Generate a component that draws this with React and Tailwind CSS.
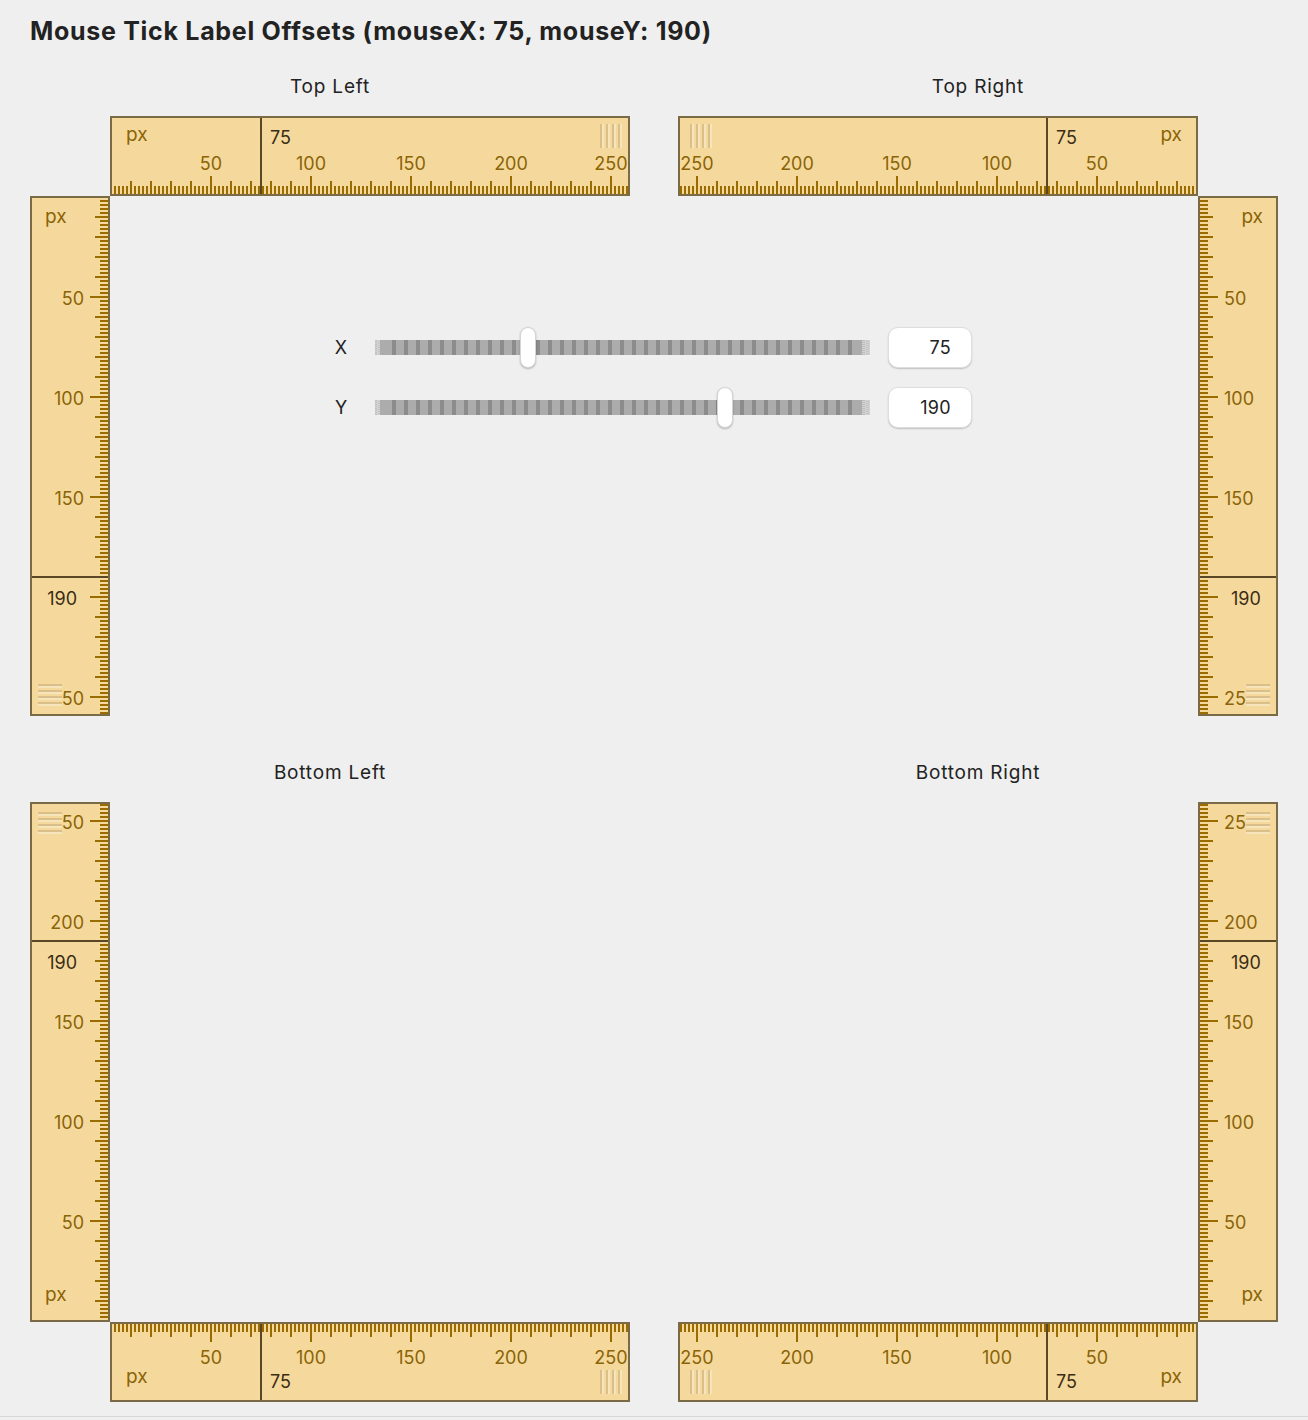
import React from "react";

const FILL = "#f5d99c";
const BORDER = "#7b6a46";
const TICK = "#9a6c00";
const LABEL = "#8a6407";
const MOUSE = "#3a2d16";
const LINE = "#5a4726";
const GRIP_DARK = "#dbbf8a";
const GRIP_LIGHT = "#f6e4ba";
const FONT = "Inter, 'Liberation Sans', sans-serif";

function tickLen(u) {
  return u % 50 === 0 ? 18 : u % 10 === 0 ? 13 : 8;
}

function HRuler({ reversed, ticksAt, mouse }) {
  const W = 520;
  const H = 80;
  const c = (u) => (reversed ? W - 2 * u - 1 : 2 * u + 1);
  const top = ticksAt === "bottom";
  const ticks = [];
  for (let u = 0; u <= 260; u += 2) {
    const len = tickLen(u);
    ticks.push(
      <rect key={u} x={c(u) - 1} y={top ? H - 2 - len : 2} width={2} height={len} fill={TICK} />
    );
  }
  const labelY = top ? 54 : 42;
  const pxY = top ? 25 : 61;
  const mY = top ? 28 : 66;
  const mx = c(mouse);
  const gx = reversed ? 12 : 490;
  const gy = top ? 8 : 48;
  const grip = [];
  for (let k = 0; k < 4; k++) {
    grip.push(<rect key={"d" + k} x={gx + 6 * k} y={gy} width={2} height={24} fill={GRIP_DARK} />);
    grip.push(<rect key={"l" + k} x={gx + 6 * k + 2} y={gy} width={2} height={24} fill={GRIP_LIGHT} />);
  }
  return (
    <svg width={W} height={H} className="block" style={{ fontFamily: FONT }}>
      <rect width={W} height={H} fill={FILL} />
      {ticks}
      {[50, 100, 150, 200, 250].map((u) => (
        <text key={u} x={c(u)} y={labelY} textAnchor="middle" fontSize={18} fill={LABEL}>
          {u}
        </text>
      ))}
      <text x={reversed ? W - 16 : 16} y={pxY} textAnchor={reversed ? "end" : "start"} fontSize={19} fill={LABEL}>
        px
      </text>
      <rect x={gx} y={gy} width={22} height={24} fill={FILL} />
      {grip}
      <rect x={mx - 1} y={0} width={2} height={H} fill={LINE} />
      <text x={mx + 9} y={mY} fontSize={18} fill={MOUSE}>
        {mouse}
      </text>
      <rect x={1} y={1} width={W - 2} height={H - 2} fill="none" stroke={BORDER} strokeWidth={2} />
    </svg>
  );
}

function VRuler({ reversed, ticksAt, mouse }) {
  const W = 80;
  const H = 520;
  const c = (u) => (reversed ? H - 2 * u - 1 : 2 * u + 1);
  const right = ticksAt === "right";
  const ticks = [];
  for (let u = 0; u <= 260; u += 2) {
    const len = tickLen(u);
    ticks.push(
      <rect key={u} x={right ? W - 2 - len : 2} y={c(u) - 1} width={len} height={2} fill={TICK} />
    );
  }
  const my = c(mouse);
  const mB = my + 28;
  const labels = [50, 100, 150, 200, 250].filter((u) => Math.abs(c(u) + 8 - mB) >= 20);
  const gx = right ? 8 : 48;
  const gy = reversed ? 10 : 488;
  const grip = [];
  for (let k = 0; k < 4; k++) {
    grip.push(<rect key={"d" + k} x={gx} y={gy + 6 * k} width={24} height={2} fill={GRIP_DARK} />);
    grip.push(<rect key={"l" + k} x={gx} y={gy + 6 * k + 2} width={24} height={2} fill={GRIP_LIGHT} />);
  }
  return (
    <svg width={W} height={H} className="block" style={{ fontFamily: FONT }}>
      <rect width={W} height={H} fill={FILL} />
      {ticks}
      {labels.map((u) => (
        <text
          key={u}
          x={right ? 54 : 26}
          y={c(u) + 8}
          textAnchor={right ? "end" : "start"}
          fontSize={18}
          fill={LABEL}
        >
          {u}
        </text>
      ))}
      <text x={right ? 15 : 65} y={reversed ? 499 : 27} textAnchor={right ? "start" : "end"} fontSize={19} fill={LABEL}>
        px
      </text>
      <rect x={gx} y={gy} width={24} height={22} fill={FILL} />
      {grip}
      <rect x={0} y={my - 1} width={W} height={2} fill={LINE} />
      <text x={right ? 47 : 33} y={mB} textAnchor={right ? "end" : "start"} fontSize={18} fill={MOUSE}>
        {mouse}
      </text>
      <rect x={1} y={1} width={W - 2} height={H - 2} fill="none" stroke={BORDER} strokeWidth={2} />
    </svg>
  );
}

function Track() {
  const stripes = [];
  for (let x = 17; x <= 480; x += 12) {
    stripes.push(<rect key={x} x={x} y={0} width={4} height={15} fill="#8c8c8c" />);
  }
  const dots = [];
  for (let y = 0; y < 15; y += 2) {
    dots.push(<rect key={"a" + y} x={0} y={y} width={2} height={1} fill="#bdbdbd" />);
    dots.push(<rect key={"b" + y} x={3} y={y + 1} width={2} height={1} fill="#c4c4c4" />);
    dots.push(<rect key={"c" + y} x={487} y={y} width={3} height={1} fill="#bdbdbd" />);
    dots.push(<rect key={"e" + y} x={491} y={y + 1} width={3} height={1} fill="#c4c4c4" />);
  }
  return (
    <svg width={495} height={15} className="block">
      <rect x={0} y={0} width={5} height={15} fill="#d2d2d2" />
      <rect x={487} y={0} width={8} height={15} fill="#d2d2d2" />
      {dots}
      <rect x={5} y={0} width={482} height={15} fill="#acacac" />
      {stripes}
    </svg>
  );
}

function SliderRow({ label, value, thumbLeft }) {
  return (
    <div className="flex h-[41px] items-center">
      <div className="w-[14px] text-center text-[18px] leading-[20px] text-[#222]">{label}</div>
      <div className="relative ml-[27px] h-[15px] w-[495px]">
        <Track />
        <div
          className="absolute top-[-13px] h-[41px] w-[16px] rounded-full border border-[#d4d4d4] bg-white shadow-[0_1px_2px_rgba(0,0,0,0.25)]"
          style={{ left: thumbLeft }}
        />
      </div>
      <div className="ml-[18px] flex h-[41px] w-[84px] items-center justify-end rounded-[10px] border border-[#dedede] bg-white pr-[20px] text-[18px] tracking-[0.3px] text-[#222] shadow-[0_1px_1.5px_rgba(0,0,0,0.2)]">
        {value}
      </div>
    </div>
  );
}

function QuadrantBox({ title, grid, children }) {
  return (
    <div className="w-[600px]">
      <div className="h-[24px] text-center text-[19px] leading-[24px] tracking-[0.8px] text-[#222]">{title}</div>
      <div className={"mt-[17px] grid " + grid}>{children}</div>
    </div>
  );
}

export default function App() {
  return (
    <div className="w-[1308px] bg-[#eeefee]" style={{ fontFamily: FONT }}>
      <div className="h-[1417px] border-b border-[#d6d7d6]">
        <h1 className="pl-[30px] pt-[16px] text-[25px] font-bold leading-[30px] tracking-[0.7px] text-[#222]">
          Mouse Tick Label Offsets (mouseX: 75, mouseY: 190)
        </h1>
        <div className="relative mt-[29px]">
          <div className="flex gap-[48px] pl-[30px]">
            <QuadrantBox title="Top Left" grid="grid-cols-[80px_520px] grid-rows-[80px_520px]">
              <div />
              <HRuler ticksAt="bottom" mouse={75} />
              <VRuler ticksAt="right" mouse={190} />
              <div />
            </QuadrantBox>
            <QuadrantBox title="Top Right" grid="grid-cols-[520px_80px] grid-rows-[80px_520px]">
              <HRuler ticksAt="bottom" reversed mouse={75} />
              <div />
              <div />
              <VRuler ticksAt="left" mouse={190} />
            </QuadrantBox>
          </div>
          <div className="mt-[45px] flex gap-[48px] pl-[30px]">
            <QuadrantBox title="Bottom Left" grid="grid-cols-[80px_520px] grid-rows-[520px_80px]">
              <VRuler ticksAt="right" reversed mouse={190} />
              <div />
              <div />
              <HRuler ticksAt="top" mouse={75} />
            </QuadrantBox>
            <QuadrantBox title="Bottom Right" grid="grid-cols-[520px_80px] grid-rows-[520px_80px]">
              <div />
              <VRuler ticksAt="left" reversed mouse={190} />
              <HRuler ticksAt="top" reversed mouse={75} />
              <div />
            </QuadrantBox>
          </div>
          <div className="absolute left-[334px] top-[252px] flex flex-col gap-[19px]">
            <SliderRow label="X" value={75} thumbLeft={145} />
            <SliderRow label="Y" value={190} thumbLeft={342} />
          </div>
        </div>
      </div>
      <div className="h-[3px]" />
    </div>
  );
}
